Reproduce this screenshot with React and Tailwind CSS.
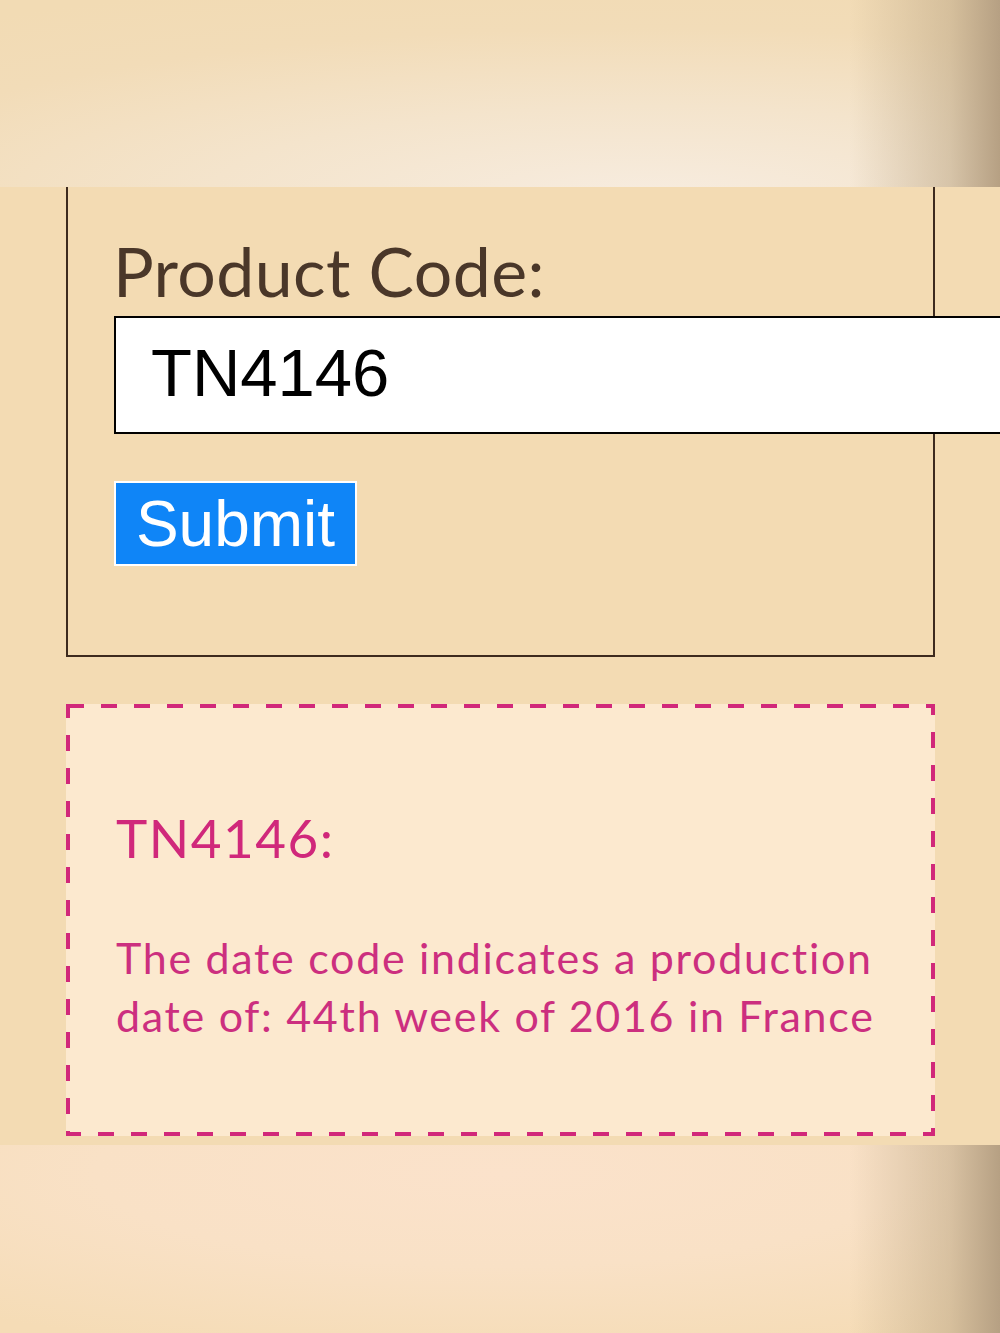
export default function App() {
  return (
    <div className="relative w-[1000px] h-[1333px] overflow-hidden bg-[#f3dbb3]">
      <div className="h-[187px] bg-[linear-gradient(to_right,rgba(0,0,0,0)_85%,rgba(190,168,135,0.55)_95%,#b6a083_100%),radial-gradient(ellipse_110%_120%_at_65%_105%,#f7ecdf_0%,#f4e4cc_40%,#f2dcb8_75%,#f2dbb4_100%)]" />
      <div className="ml-[66px] w-[869px] h-[470px] border-2 border-t-0 border-[#3d2a1e] pt-[44px] pl-[46px]">
        <div className="text-[68px] leading-[80px] tracking-[0.4px] text-[#4a3729] font-['Lato',sans-serif] -ml-[1px]">Product Code:</div>
        <div className="mt-[5px] w-[900px] h-[118px] border-2 border-black bg-white pl-[35px] pb-[6px] flex items-center">
          <span className="text-[67px] text-black font-['Liberation_Sans',Arial,sans-serif] leading-none">TN4146</span>
        </div>
        <div className="mt-[47px] inline-flex items-center justify-center w-[243px] h-[85px] border-2 border-white bg-[#0f85f7] text-white font-['Liberation_Sans',Arial,sans-serif] text-[64px] leading-none">
          Submit
        </div>
      </div>
      <div className="relative mt-[47px] ml-[66px] w-[869px] h-[432px] bg-[#fce9cf] pl-[50px] pt-[104px]">
        <svg className="absolute inset-0" width="869" height="432" viewBox="0 0 869 432">
          <rect x="2" y="2" width="865" height="428" fill="none" stroke="#d1287a" strokeWidth="4" strokeDasharray="16 17" />
        </svg>
        <div className="relative text-[53px] leading-[60px] tracking-[1.5px] text-[#d0287b] font-['Lato',sans-serif]">TN4146:</div>
        <div className="relative mt-[61px] text-[43px] leading-[58px] tracking-[1.7px] text-[#cc2f7f] font-['Lato',sans-serif] w-[790px]">
          The date code indicates a production date of: 44th week of 2016 in France
        </div>
      </div>
      <div className="absolute left-0 right-0 top-[1145px] h-[188px] bg-[linear-gradient(to_right,rgba(0,0,0,0)_85%,rgba(190,168,135,0.55)_95%,#b6a083_100%),radial-gradient(ellipse_90%_110%_at_50%_15%,#fbe2cb_0%,#f9e1c6_45%,#f5dcb6_90%)]" />
    </div>
  );
}
